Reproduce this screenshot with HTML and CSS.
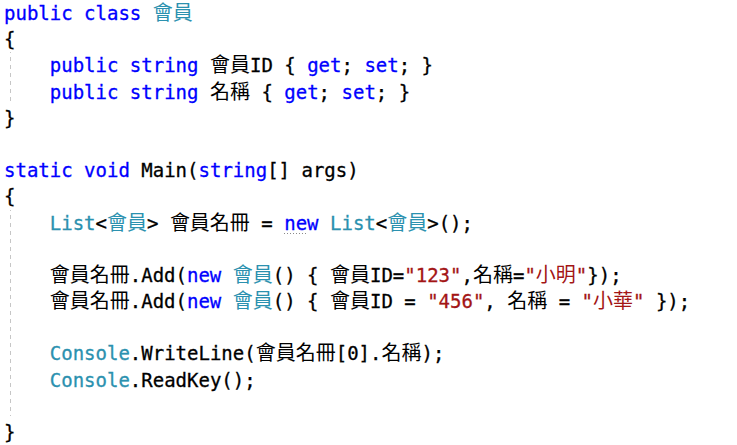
FILE: index.html
```html
<!DOCTYPE html>
<html lang="zh-Hant">
<head>
<meta charset="utf-8">
<title>會員</title>
<link rel="stylesheet" href="styles.css">
</head>
<body>
<div class="code">
<div class="ln"><span class="kw">public</span> <span class="kw">class</span> <span class="ty zh">會員</span></div>
<div class="ln">{</div>
<div class="block">
<div class="ln">    <span class="kw">public</span> <span class="kw">string</span> <span class="zh">會員</span>ID { <span class="kw">get</span>; <span class="kw">set</span>; }</div>
<div class="ln">    <span class="kw">public</span> <span class="kw">string</span> <span class="zh">名稱</span> { <span class="kw">get</span>; <span class="kw">set</span>; }</div>
</div>
<div class="ln">}</div>
<div class="ln"> </div>
<div class="ln"><span class="kw">static</span> <span class="kw">void</span> Main(<span class="kw">string</span>[] args)</div>
<div class="ln">{</div>
<div class="block">
<div class="ln">    <span class="ty">List</span>&lt;<span class="ty zh">會員</span>&gt; <span class="zh">會員名冊</span> = <span class="kw"><span class="hint">ne</span>w</span> <span class="ty">List</span>&lt;<span class="ty zh">會員</span>&gt;();</div>
<div class="ln"> </div>
<div class="ln">    <span class="zh">會員名冊</span>.Add(<span class="kw">new</span> <span class="ty zh">會員</span>() { <span class="zh">會員</span>ID=<span class="st">"123"</span>,<span class="zh">名稱</span>=<span class="st">"<span class="zh">小明</span>"</span>});</div>
<div class="ln">    <span class="zh">會員名冊</span>.Add(<span class="kw">new</span> <span class="ty zh">會員</span>() { <span class="zh">會員</span>ID = <span class="st">"456"</span>, <span class="zh">名稱</span> = <span class="st">"<span class="zh">小華</span>"</span> });</div>
<div class="ln"> </div>
<div class="ln">    <span class="ty">Console</span>.WriteLine(<span class="zh">會員名冊</span>[0].<span class="zh">名稱</span>);</div>
<div class="ln">    <span class="ty">Console</span>.ReadKey();</div>
<div class="ln"> </div>
</div>
<div class="ln">}</div>
</div>
</body>
</html>
```
FILE: styles.css
```css
html, body {
  margin: 0;
  padding: 0;
  background: #ffffff;
}

.code {
  padding: 0 0 0 4px;
  font-family: "DejaVu Sans Mono", "Liberation Mono", "Noto Sans CJK TC", monospace;
  font-size: 19px;
  color: #000000;
  -webkit-text-stroke: 0.3px currentColor;
}

.ln {
  height: 26.2px;
  line-height: 26.2px;
  white-space: pre;
}

.zh {
  font-family: "Noto Sans CJK TC", sans-serif;
  font-size: 20px;
  line-height: 20px;
  -webkit-text-stroke: 0;
}

.kw { color: #0000ff; }
.ty { color: #2b91af; }
.st { color: #a31515; }

.block {
  background-image: repeating-linear-gradient(to bottom, #c6c6c6 0 4px, transparent 4px 8px);
  background-size: 1px 100%;
  background-position: 6px -3px;
  background-repeat: no-repeat;
}

.hint {
  background-image: repeating-linear-gradient(to right, #8a8a8a 0 1px, transparent 1px 3px);
  background-size: 100% 1px;
  background-position: left bottom;
  background-repeat: no-repeat;
}
```
